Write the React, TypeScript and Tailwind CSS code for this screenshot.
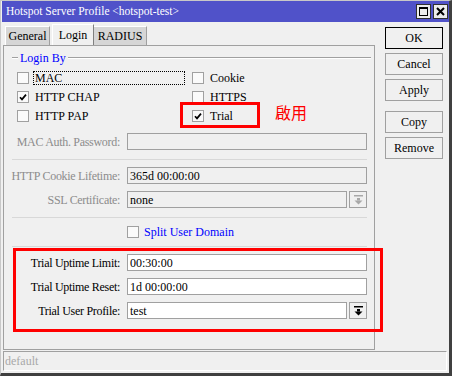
import type { ReactNode } from 'react';

const serif = "font-['Liberation_Serif',serif]";

function Check({ checked }: { checked?: boolean }) {
  return (
    <span className="w-[12px] h-[12px] border border-[#a0a0a0] bg-[#fafafa] flex items-center justify-center shrink-0">
      {checked && (
        <svg width="8" height="8" viewBox="0 0 8 8">
          <path d="M1 4.2 L3 6.4 L7 1.6" stroke="#000" strokeWidth="1.7" fill="none" />
        </svg>
      )}
    </span>
  );
}

function DropArrow({ color }: { color: string }) {
  return (
    <svg width="9" height="10" viewBox="0 0 9 10">
      <rect x="0" y="0" width="9" height="1.5" fill={color} />
      <rect x="3" y="3" width="3" height="2.5" fill={color} />
      <path d="M0.5 5.5 H8.5 L4.5 9.5 Z" fill={color} />
    </svg>
  );
}

function CheckItem({ label, checked, focus, wide }: { label: string; checked?: boolean; focus?: boolean; wide?: boolean }) {
  return (
    <div className="flex items-center h-[14px]">
      <Check checked={checked} />
      <span
        className={`ml-[4px] pl-[1px] h-[14px] flex items-center border border-dotted ${
          focus ? 'border-black' : 'border-transparent'
        } ${wide ? 'w-[152px]' : ''}`}
      >
        {label}
      </span>
    </div>
  );
}

function Field({
  label,
  value,
  disabled,
  active,
  dropdown,
  className = '',
}: {
  label: string;
  value?: string;
  disabled?: boolean;
  active?: boolean;
  dropdown?: boolean;
  className?: string;
}) {
  return (
    <div className={`flex items-center h-[17px] ${className}`}>
      <span
        className={`w-[116px] text-right whitespace-nowrap tracking-[-0.3px] ${
          disabled ? 'text-[#8c8c8c]' : 'text-black'
        }`}
      >
        {label}
      </span>
      <div className="ml-[7px] w-[240px] flex h-[17px]">
        <div
          className={`flex-1 h-[17px] border border-[#a0a0a0] pl-[2px] flex items-center text-black ${
            active ? 'bg-white' : 'bg-[#f0f0f0]'
          }`}
        >
          {value}
        </div>
        {dropdown && (
          <div className="ml-[2px] w-[18px] h-[17px] border border-[#a0a0a0] bg-[#f0f0f0] flex items-center justify-center">
            <DropArrow color={active ? '#000' : '#a8a8a8'} />
          </div>
        )}
      </div>
    </div>
  );
}

function Separator({ className = '' }: { className?: string }) {
  return <div className={`h-px bg-[#d8d8d8] ml-[8px] mr-[7px] ${className}`} />;
}

function Btn({ children, primary, className = '' }: { children: ReactNode; primary?: boolean; className?: string }) {
  return (
    <div
      className={`w-[58px] h-[22px] flex items-center justify-center bg-[#f0f0f0] border ${
        primary ? 'border-black' : 'border-[#a0a0a0]'
      } ${className}`}
    >
      {children}
    </div>
  );
}

export default function App() {
  return (
    <div
      className={`${serif} text-[12px] relative w-[452px] h-[376px] bg-[#f0f0f0] border-l border-t border-l-[#c8c8c8] border-t-[#c8c8c8] border-r-[3px] border-b-[3px] border-r-[#404040] border-b-[#404040] flex flex-col overflow-hidden`}
    >
      {/* Title bar */}
      <div className="ml-px h-[21px] bg-[#5052c9] flex items-center justify-between pl-[4px] pr-[1px]">
        <span className="text-white text-[11.5px] whitespace-nowrap">Hotspot Server Profile &lt;hotspot-test&gt;</span>
        <div className="flex gap-[2px]">
          <div className="w-[15px] h-[15px] bg-[#ececec] border border-[#303030] flex items-center justify-center">
            <div className="w-[9px] h-[9px] border border-black border-t-2" />
          </div>
          <div className="w-[15px] h-[15px] bg-[#ececec] border border-[#303030] flex items-center justify-center">
            <svg width="9" height="9" viewBox="0 0 9 9">
              <path d="M1 1 L8 8 M8 1 L1 8" stroke="#000" strokeWidth="2" />
            </svg>
          </div>
        </div>
      </div>

      {/* Body */}
      <div className="flex h-[328px]">
        <div className="ml-[2px] w-[372px] flex flex-col">
          {/* Tabs */}
          <div className="h-[23px] flex items-end pl-[2px]">
            <div className="w-[45px] h-[19px] bg-[#d6d6d6] border-l border-t border-white border-r border-r-[#a0a0a0] flex items-center justify-center">
              General
            </div>
            <div className="ml-[2px] w-[42px] h-[21px] bg-[#f0f0f0] border-l border-t border-white border-r border-r-[#808080] flex items-center justify-center">
              Login
            </div>
            <div className="w-[53px] h-[19px] bg-[#d6d6d6] border-t border-white border-r border-r-[#a0a0a0] flex items-center justify-center">
              RADIUS
            </div>
          </div>

          {/* Panel */}
          <div className="h-[305px] border border-[#a0a0a0] flex flex-col">
            {/* Login By group header */}
            <div className="mt-[5px] h-[13px] flex items-center">
              <div className="ml-[8px] w-[6px] h-[2px] border-t border-[#a0a0a0] bg-white" />
              <span className="px-[2px] text-[#0000ff] leading-none">Login By</span>
              <div className="flex-1 mr-[3px] h-[2px] border-t border-[#a0a0a0] bg-white" />
            </div>

            {/* Checkboxes */}
            <div className="mt-[7px] ml-[13px] grid grid-cols-[175px_1fr] gap-y-[5px]">
              <CheckItem label="MAC" focus wide />
              <CheckItem label="Cookie" />
              <CheckItem label="HTTP CHAP" checked />
              <CheckItem label="HTTPS" />
              <CheckItem label="HTTP PAP" />
              <CheckItem label="Trial" checked />
            </div>

            <Field label="MAC Auth. Password:" disabled className="mt-[10px]" />
            <Separator className="mt-[9px]" />
            <Field label="HTTP Cookie Lifetime:" value="365d 00:00:00" disabled className="mt-[7px]" />
            <Field label="SSL Certificate:" value="none" disabled dropdown className="mt-[7px]" />
            <Separator className="mt-[9px]" />

            <div className="mt-[7px] h-[14px] flex items-center pl-[123px]">
              <Check />
              <span className="ml-[5px] text-[#0000ff]">Split User Domain</span>
            </div>

            <Separator className="mt-[7px]" />
            <Field label="Trial Uptime Limit:" value="00:30:00" active className="mt-[7px]" />
            <Field label="Trial Uptime Reset:" value="1d 00:00:00" active className="mt-[7px]" />
            <Field label="Trial User Profile:" value="test" active dropdown className="mt-[7px]" />
          </div>
        </div>

        {/* Buttons */}
        <div className="ml-[10px] pt-[5px] flex flex-col">
          <Btn primary>OK</Btn>
          <Btn className="mt-[4px]">Cancel</Btn>
          <Btn className="mt-[4px]">Apply</Btn>
          <Btn className="mt-[10px]">Copy</Btn>
          <Btn className="mt-[4px]">Remove</Btn>
        </div>
      </div>

      {/* Status bar */}
      <div className="mt-px ml-[2px] w-[444px] h-[20px] border-l border-t border-[#a0a0a0] border-r border-b border-r-white border-b-white flex items-center pl-[1px] text-[#a8a8a8]">
        default
      </div>

      {/* Annotations */}
      <div className="absolute left-[179px] top-[101px] w-[80px] h-[26px] border-[3px] border-[#ff0000]" />
      <span className="absolute left-[274px] top-[101px] text-[16px] leading-[20px] text-[#ff0000] font-['Noto_Sans_CJK_TC',sans-serif]">
        啟用
      </span>
      <div className="absolute left-[12px] top-[247px] w-[370px] h-[84px] border-[3px] border-[#ff0000]" />
    </div>
  );
}
